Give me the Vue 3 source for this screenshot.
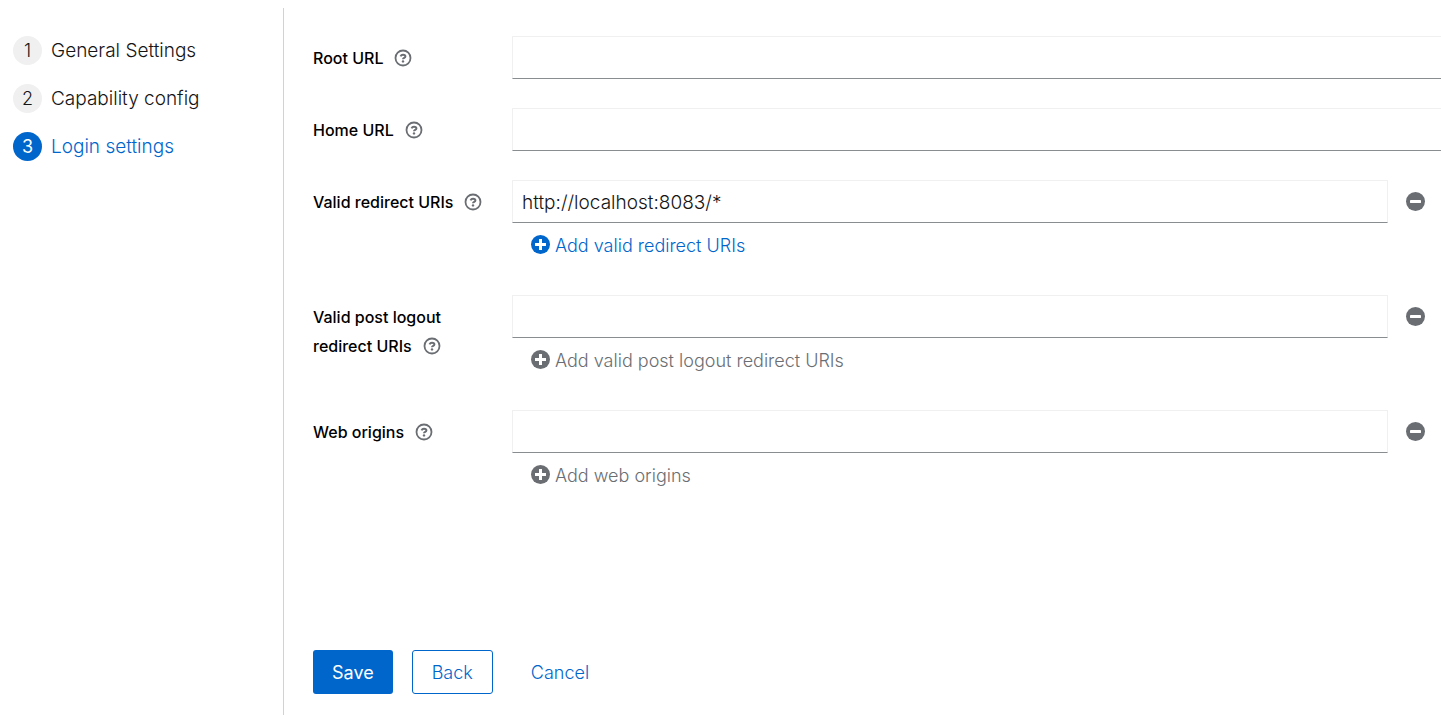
<script setup>
import { reactive } from 'vue'

const steps = [
  { id: 1, name: 'General Settings' },
  { id: 2, name: 'Capability config' },
  { id: 3, name: 'Login settings' },
]
const current = 3

const fields = reactive([
  { id: 'root-url', label: 'Root URL', value: '' },
  { id: 'home-url', label: 'Home URL', value: '' },
  { id: 'redirect-uris', label: 'Valid redirect URIs', value: 'http://localhost:8083/*', add: 'Add valid redirect URIs' },
  { id: 'logout-uris', label: 'Valid post logout redirect URIs', value: '', add: 'Add valid post logout redirect URIs' },
  { id: 'web-origins', label: 'Web origins', value: '', add: 'Add web origins' },
])
</script>

<template>
  <div class="wizard">
    <nav class="steps" aria-label="Wizard steps">
      <ol>
        <li v-for="step in steps" :key="step.id">
          <button type="button" class="step" :class="{ current: step.id === current }">
            <span class="number">{{ step.id }}</span>
            <span>{{ step.name }}</span>
          </button>
        </li>
      </ol>
    </nav>

    <form class="main" @submit.prevent>
      <div class="fields">
        <div v-for="field in fields" :key="field.id" class="row">
          <div class="label">
            <label :for="field.id">{{ field.label }}</label>
            <button type="button" class="help" :aria-label="'Help for ' + field.label">
              <svg viewBox="0 0 18 18" fill="none" stroke="currentColor">
                <circle cx="9" cy="9" r="7.5" stroke-width="1.8" />
                <path d="M6.5 7.3C7 6.2 7.8 5.7 9 5.7C10.4 5.7 11.4 6.4 11.4 7.5C11.4 8.9 9 8.8 9 10.3" stroke-width="2" />
                <circle cx="9" cy="12.4" r="1.2" fill="currentColor" stroke="none" />
              </svg>
            </button>
          </div>

          <div class="control">
            <div class="group" :class="{ open: !field.add }">
              <input :id="field.id" v-model="field.value" type="text" />
              <button v-if="field.add" type="button" class="remove" :aria-label="'Remove from ' + field.label">
                <svg viewBox="0 0 19 19">
                  <circle cx="9.5" cy="9.5" r="9.5" fill="currentColor" />
                  <rect x="4" y="8" width="11" height="3" rx="0.4" fill="#fff" />
                </svg>
              </button>
            </div>
            <button v-if="field.add" type="button" class="add" :class="{ muted: !field.value }">
              <svg viewBox="0 0 19 19">
                <circle cx="9.5" cy="9.5" r="9.5" fill="currentColor" />
                <path d="M8 4h3v4h4v3h-4v4H8v-4H4V8h4z" fill="#fff" />
              </svg>
              <span>{{ field.add }}</span>
            </button>
          </div>
        </div>
      </div>

      <div class="actions">
        <button type="submit" class="btn primary">Save</button>
        <button type="button" class="btn secondary">Back</button>
        <button type="button" class="btn link">Cancel</button>
      </div>
    </form>
  </div>
</template>

<style>
body {
  margin: 0;
  background: #fff;
}
</style>

<style scoped>
.wizard {
  display: flex;
  box-sizing: border-box;
  min-height: 100vh;
  padding-top: 8px;
  font-family: Inter, "Liberation Sans", sans-serif;
  font-size: 18px;
  font-weight: 300;
  line-height: 28px;
  color: #151515;
}

button {
  padding: 0;
  border: 0;
  background: none;
  font: inherit;
  color: inherit;
  cursor: pointer;
}

svg {
  display: block;
  flex: none;
}

.steps {
  flex: none;
  box-sizing: border-box;
  width: 284px;
  padding: 28px 13px;
  border-right: 1px solid #d2d2d2;
  font-size: 19px;
}

.steps ol {
  display: flex;
  flex-direction: column;
  gap: 19px;
  margin: 0;
  padding: 0;
  list-style: none;
}

.steps li {
  display: flex;
}

.step {
  display: flex;
  align-items: center;
  gap: 9px;
}

.number {
  width: 29px;
  border-radius: 15px;
  background: #f0f0f0;
  font-size: 18px;
  line-height: 29px;
  text-align: center;
}

.current {
  color: #06c;
}

.current .number {
  background: #06c;
  color: #fff;
  font-weight: 400;
}

.main {
  flex: 1;
  min-width: 0;
  display: flex;
  flex-direction: column;
  justify-content: space-between;
  padding: 28px 0 21px 29px;
}

.fields {
  display: grid;
  gap: 29px;
}

.row {
  display: grid;
  grid-template-columns: 172px 1fr;
  column-gap: 27px;
}

.label {
  padding-top: 8px;
  font-size: 16px;
  font-weight: 500;
  line-height: 29px;
  color: #000;
}

.help {
  display: inline-block;
  margin-left: 11px;
  vertical-align: -3px;
  color: #6a6e73;
}

.help svg {
  width: 18px;
  height: 18px;
}

.group {
  display: flex;
  padding-right: 16px;
}

.group.open {
  padding-right: 0;
}

input {
  flex: 1;
  min-width: 0;
  box-sizing: border-box;
  height: 43px;
  padding: 1px 9px 0;
  border: 1px solid #f0f0f0;
  border-bottom-color: #8a8d90;
  border-radius: 0;
  background: #fff;
  font: inherit;
  font-size: 19px;
  color: inherit;
}

.open input {
  border-right: 0;
}

.remove {
  padding-left: 18px;
  color: #6a6e73;
}

.remove svg,
.add svg {
  width: 19px;
  height: 19px;
}

.add {
  display: flex;
  align-items: center;
  gap: 5px;
  height: 43px;
  padding: 0 19px;
  color: #06c;
}

.add span {
  padding-top: 2px;
}

.add.muted {
  color: #6a6e73;
}

.actions {
  display: flex;
  gap: 19px;
}

.btn {
  height: 44px;
  padding: 2px 18px 0;
  border: 1px solid transparent;
  border-radius: 3px;
}

.primary {
  background: #06c;
  color: #fff;
  font-weight: 400;
}

.secondary {
  padding: 2px 19px 0;
  border-color: #06c;
  color: #06c;
}

.link {
  color: #06c;
}
</style>
